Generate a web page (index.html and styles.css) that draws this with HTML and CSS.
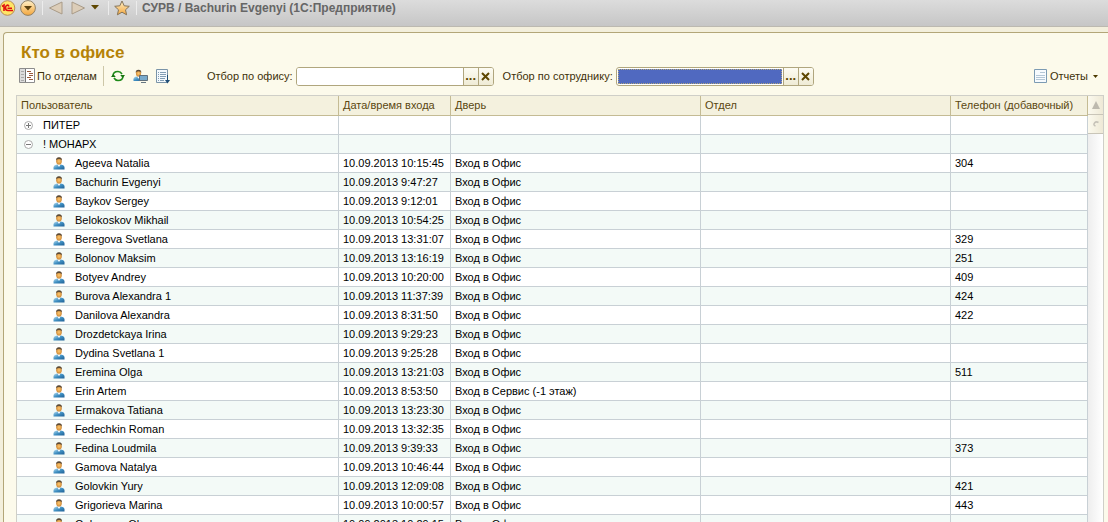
FILE: index.html
```
<!DOCTYPE html>
<html lang="ru">
<head>
<meta charset="utf-8">
<title>Кто в офисе</title>
<link rel="stylesheet" href="styles.css">
</head>
<body>
<svg class="defs" aria-hidden="true">
  <defs>
    <linearGradient id="shirt" x1="0" y1="0" x2="1" y2="1"><stop offset="0" stop-color="#b9dff2"/><stop offset=".5" stop-color="#3f8fc2"/><stop offset="1" stop-color="#1f5f94"/></linearGradient>
    <radialGradient id="face"><stop offset="0" stop-color="#ffc870"/><stop offset="1" stop-color="#d08a35"/></radialGradient>
    <linearGradient id="gold" x1="0" y1="0" x2="0" y2="1"><stop offset="0" stop-color="#fff0c8"/><stop offset="1" stop-color="#f3a63c"/></linearGradient>
    <symbol id="user" viewBox="0 0 12 13">
      <path d="M.5 12.500V10.500Q.5 8 4 7.500H8Q11.500 8 11.500 10.500V12.500Z" fill="url(#shirt)"/>
      <path d="M4.500 7.500L6 10L7.500 7.500Z" fill="#fff"/>
      <ellipse cx="6" cy="4.200" rx="2.800" ry="3.400" fill="url(#face)"/>
      <path d="M3 3.800Q2.700 .3 6 .3T9 3.800L8.300 2.400Q6 1.500 3.700 2.400Z" fill="#5a4a38"/>
    </symbol>
  </defs>
</svg>
<header class="titlebar">
  <button class="icon-btn" aria-label="1С"><svg width="16" height="16" viewBox="0 0 16 16"><circle cx="7.500" cy="8" r="7.300" fill="#ffe566" stroke="#b98a58"/><path d="M2 6.500L4 5V11M9 6.500Q8.500 5 7 5.200Q5.500 5.700 5.500 7.800Q5.500 10.500 8 10.500H13M7.500 8.300H12" fill="none" stroke="#e01010" stroke-width="1.600"/></svg></button>
  <button class="icon-btn main-menu" aria-label="Меню"><svg width="16" height="16" viewBox="0 0 16 16"><circle cx="8" cy="8" r="7.400" fill="url(#gold)" stroke="#8f8068"/><path d="M4 6H12L8 10.500Z" fill="#5c4210"/></svg></button>
  <span class="bar-sep"></span>
  <button class="icon-btn back" aria-label="Назад"><svg width="16" height="14" viewBox="0 0 16 14"><path d="M1.500 7L14 1V13Z" fill="#dccdb8" stroke="#a99b88"/></svg></button>
  <button class="icon-btn next" aria-label="Вперед"><svg width="16" height="14" viewBox="0 0 16 14"><path d="M14.500 7L2 1V13Z" fill="#dccdb8" stroke="#a99b88"/></svg></button>
  <button class="icon-btn history" aria-label="История"><svg width="8" height="5" viewBox="0 0 8 5"><path d="M0 0H8L4 4.500Z" fill="#5e4700"/></svg></button>
  <span class="bar-sep"></span>
  <button class="icon-btn star" aria-label="Избранное"><svg width="16" height="16" viewBox="0 0 16 16"><path d="M8 1L10.200 5.800L15.300 6.300L11.500 9.800L12.600 14.800L8 12.200L3.400 14.800L4.500 9.800L.7 6.300L5.800 5.800Z" fill="url(#gold)" stroke="#85745a"/></svg></button>
  <span class="bar-sep"></span>
  <span class="app-title">СУРВ / Bachurin Evgenyi (1С:Предприятие)</span>
</header>
<main class="panel">
  <h1>Кто в офисе</h1>
  <div class="toolbar">
    <button class="tool"><svg width="16" height="16" viewBox="0 0 16 16"><path d="M.5 .5H15.500V14.500H.5Z" fill="#fff" stroke="#8c8c8c"/><path d="M1 1H6V14H1Z" fill="#dcdcdc"/><path d="M6.500 1V14" stroke="#777"/><path d="M2 3.500H5M2 6.500H5M2 9.500H5M2 12.500H5" stroke="#aaa"/><path d="M8 3.500H12M10 5.500H14M10 7.500H14M8 9.500H12M10 11.500H14" stroke="#985a3c"/></svg><span>По отделам</span></button>
    <span class="tool-sep"></span>
    <button class="tool refresh" aria-label="Обновить"><svg width="14" height="12" viewBox="0 0 14 12"><path d="M2 6Q2 1.500 7 1.500Q9.500 1.500 11 4M12 6Q12 10.500 7 10.500Q4.500 10.500 3 8" fill="none" stroke="#1f8a1a" stroke-width="1.600"/><path d="M0 7H4.800L2.300 4ZM9.200 5H14L11.700 8Z" fill="#167510"/></svg></button>
    <button class="tool station" aria-label="Рабочее место"><svg width="15" height="14" viewBox="0 0 15 14"><use href="#user" x="0" y="0" width="11" height="13"/><path d="M6.500 6.500H14.500V11.500H6.500Z" fill="#77a9cb" stroke="#5f6f7c"/><path d="M8 13.500H13" stroke="#677782"/></svg></button>
    <button class="tool" aria-label="Вывести список"><svg width="14" height="15" viewBox="0 0 14 15"><path d="M.5 .5H11.500V13.500H.5Z" fill="#f4f9fd" stroke="#7a94a8"/><path d="M2 3.500H3M4 3.500H10M2 5.500H3M4 5.500H10M2 7.500H3M4 7.500H10M2 9.500H3M4 9.500H9M2 11.500H3M4 11.500H8" stroke="#829eb4"/><path d="M11.500 6V13" stroke="#1e4d76"/><path d="M9 11H14L11.500 14.500Z" fill="#1e4d76"/></svg></button>
    <label class="office-label" for="office">Отбор по офису:</label>
    <span class="field"><input id="office" type="text"><button aria-label="Выбрать офис">...</button><button aria-label="Очистить офис"><svg width="9" height="9" viewBox="0 0 9 9"><path d="M1 1L8 8M8 1L1 8" stroke="#5e4700" stroke-width="2"/></svg></button></span>
    <label class="staff-label" for="staff">Отбор по сотруднику:</label>
    <span class="field"><input id="staff" class="selected" type="text"><button aria-label="Выбрать сотрудника">...</button><button aria-label="Очистить сотрудника"><svg width="9" height="9" viewBox="0 0 9 9"><path d="M1 1L8 8M8 1L1 8" stroke="#5e4700" stroke-width="2"/></svg></button></span>
    <button class="tool reports"><svg width="13" height="14" viewBox="0 0 13 14"><path d="M.5 .5H12.500V13.500H.5Z" fill="#f7fbfe" stroke="#7c9bb3"/><path d="M6 3.500H11M2 6.500H11M2 8.500H11M2 10.500H11" stroke="#b4c7d6"/></svg><span>Отчеты</span><svg class="caret" width="5" height="3" viewBox="0 0 5 3"><path d="M0 0H5L2.500 3Z" fill="#4b3800"/></svg></button>
  </div>
  <div class="grid">
    <table>
      <colgroup><col class="c-user"><col class="c-time"><col class="c-door"><col class="c-dept"><col class="c-phone"></colgroup>
      <thead><tr><th>Пользователь</th><th>Дата/время входа</th><th>Дверь</th><th>Отдел</th><th>Телефон (добавочный)</th></tr></thead>
      <tbody id="rows"></tbody>
    </table>
    <div class="scroll">
      <button aria-label="Вверх"><svg width="8" height="8" viewBox="0 0 8 8"><path d="M4 0L8 8H0Z" fill="#bdb9ae"/></svg></button>
      <button aria-label="К текущей строке"><svg width="6" height="6" viewBox="0 0 6 6"><path d="M5.500 1.500Q3 0 1.500 2T2.500 5" fill="none" stroke="#c6c2b8" stroke-width="1.500"/></svg></button>
    </div>
  </div>
</main>
<script src="app.js"></script>
</body>
</html>
```
FILE: styles.css
```
* { box-sizing: border-box; }
body {
  margin: 0;
  height: 100vh;
  overflow: hidden;
  display: flex;
  flex-direction: column;
  background: #f3efdc;
  color: #000;
  font: 11px/14px "Liberation Sans", Arial, sans-serif;
}
button, input { font: inherit; color: inherit; }
button { margin: 0; padding: 0; border: 0; background: none; }
svg { display: block; flex: none; }
.defs { position: absolute; width: 0; height: 0; }

.titlebar {
  flex: none;
  display: flex;
  align-items: center;
  height: 27px;
  padding-bottom: 11px;
  background: linear-gradient(#dcdcdc, #c6c6c6);
  border-bottom: 1px solid #bcb9b0;
}
.main-menu { margin-left: 4px; }
.bar-sep { width: 1px; height: 14px; margin: 0 5px 0 6px; background: #ececec; }
.next { margin-left: 6px; }
.history { margin: 0 3px 0 5px; }
.app-title {
  color: #666;
  font: bold 12px/16px "Liberation Sans", Arial, sans-serif;
  white-space: nowrap;
}

.panel {
  flex: 1;
  min-height: 0;
  margin: 5px 0 0 3px;
  padding: 10px 4px 0 12px;
  background: #fcfaeb;
  border: solid #b3a678;
  border-width: 1px 0 0 1px;
  border-top-left-radius: 4px;
}
h1 {
  margin: 0 0 4px 5px;
  color: #b58207;
  font: bold 17px/19px "Liberation Sans", Arial, sans-serif;
}
.toolbar {
  display: flex;
  align-items: center;
  height: 20px;
  margin: 0 1px 9px 3px;
  color: #3d3009;
  white-space: nowrap;
}
.tool { display: flex; align-items: center; gap: 2px; }
.tool-sep { width: 1px; height: 20px; margin: 0 7px 0 6px; background: #cdc7a8; }
.station { margin: 0 8px; }
.office-label { margin: 0 3px 0 37px; }
.staff-label { margin: 0 3px 0 9px; }
.field {
  flex: 0 1 198px;
  display: flex;
  height: 19px;
  border: 1px solid #b0a67e;
  border-radius: 3px;
  background: #fff;
  overflow: hidden;
}
.field input {
  flex: 1;
  min-width: 0;
  margin: 0;
  padding: 0 3px;
  border: 0;
  background: #fff;
}
.field input.selected {
  margin: 1px;
  background: #5069c0;
  outline: 1px dotted #b0a67e;
  outline-offset: -1px;
}
.field button {
  width: 15px;
  display: grid;
  place-items: center;
  border-left: 1px solid #b0a67e;
  background: linear-gradient(#fdfcf3, #efebd5);
  color: #5e4700;
  font-size: 13px;
  font-weight: bold;
}
.reports { margin-left: auto; gap: 3px; }
.caret { margin: 0 5px 0 2px; }

.grid { display: flex; border: 1px solid #cfcfc8; border-bottom: 0; }
table {
  flex: 1;
  min-width: 0;
  table-layout: fixed;
  border-collapse: separate;
  border-spacing: 0;
  background: #fff;
}
.c-user { width: 322px; }
.c-time { width: 112px; }
.c-door, .c-dept { width: 250px; }
th, td {
  height: 19px;
  padding: 1px 4px 0;
  border: solid #c8d0d5;
  border-width: 0 1px 1px 0;
  line-height: 15px;
  text-align: left;
  white-space: nowrap;
  overflow: hidden;
}
th {
  height: 20px;
  padding-top: 0;
  background: #f4f1de;
  border-color: #c4bb94;
  color: #5a4710;
  font-weight: normal;
}
tbody tr:nth-child(even) { background: #f3faf7; }
.cell { display: flex; align-items: center; }
.group { gap: 10px; padding-left: 3px; }
.person { gap: 10px; padding-left: 32px; }
.scroll { flex: none; width: 15px; background: linear-gradient(90deg, #eee, #fff); }
.scroll button {
  width: 15px;
  height: 19px;
  display: grid;
  place-items: center;
  border-bottom: 1px solid #c9c5b8;
  background: linear-gradient(90deg, #fbf9ee, #eee9d6);
}
```
FILE: app.js
```
const people = [
  ["Ageeva Natalia", "10:15:45", "304"],
  ["Bachurin Evgenyi", "9:47:27", ""],
  ["Baykov Sergey", "9:12:01", ""],
  ["Belokoskov Mikhail", "10:54:25", ""],
  ["Beregova Svetlana", "13:31:07", "329"],
  ["Bolonov Maksim", "13:16:19", "251"],
  ["Botyev Andrey", "10:20:00", "409"],
  ["Burova Alexandra 1", "11:37:39", "424"],
  ["Danilova Alexandra", "8:31:50", "422"],
  ["Drozdetckaya Irina", "9:29:23", ""],
  ["Dydina Svetlana 1", "9:25:28", ""],
  ["Eremina Olga", "13:21:03", "511"],
  ["Erin Artem", "8:53:50", "", "Вход в Сервис (-1 этаж)"],
  ["Ermakova Tatiana", "13:23:30", ""],
  ["Fedechkin Roman", "13:32:35", ""],
  ["Fedina Loudmila", "9:39:33", "373"],
  ["Gamova Natalya", "10:46:44", ""],
  ["Golovkin Yury", "12:09:08", "421"],
  ["Grigorieva Marina", "10:00:57", "443"],
  ["Gulumova Olga", "10:29:15", ""]
];
const toggle = plus => `<svg width="9" height="9" viewBox="0 0 9 9"><circle cx="4.500" cy="4.500" r="4" fill="#fff" stroke="#aaa"/><path d="M2 4.500H7${plus ? "M4.500 2V7" : ""}" stroke="#777"/></svg>`;
const group = (name, plus) =>
  `<tr><td><div class="cell group">${toggle(plus)}<span>${name}</span></div></td><td></td><td></td><td></td><td></td></tr>`;
const person = ([name, time, phone, door = "Вход в Офис"]) =>
  `<tr><td><div class="cell person"><svg width="12" height="13"><use href="#user"/></svg><span>${name}</span></div></td><td>10.09.2013 ${time}</td><td>${door}</td><td></td><td>${phone}</td></tr>`;
document.getElementById("rows").innerHTML =
  group("ПИТЕР", true) + group("! МОНАРХ", false) + people.map(person).join("");
```
